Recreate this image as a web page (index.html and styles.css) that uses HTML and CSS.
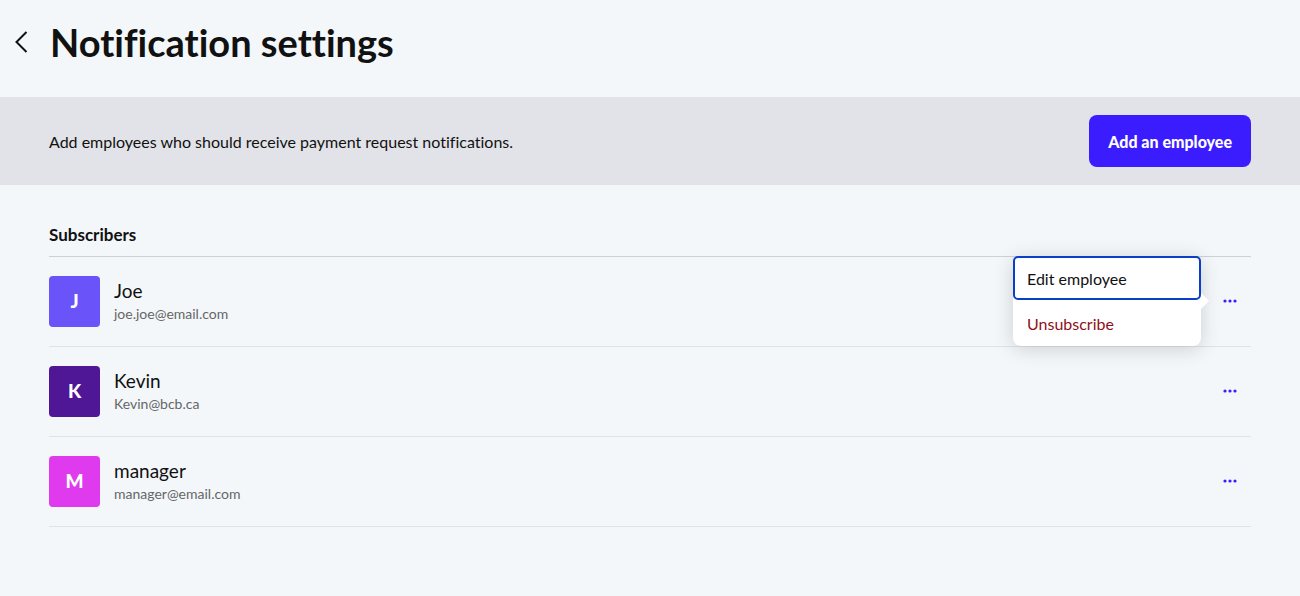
FILE: index.html
```
<!DOCTYPE html>
<html lang="en">
<head>
    <meta charset="UTF-8">
    <meta name="viewport" content="width=device-width, initial-scale=1.0">
    <title>Notification settings</title>
    <link rel="stylesheet" href="styles.css">
</head>
<body>
    <!-- Page Header -->
    <header class="page-header">
        <a href="#" class="back-link" aria-label="Back">
            <svg width="14" height="22" viewBox="0 0 14 22" fill="none" stroke="#111" stroke-width="2"><path d="M12.5 1L2.5 11L12.5 21"/></svg>
        </a>
        <h1>Notification settings</h1>
    </header>

    <!-- Banner -->
    <section class="banner">
        <p>Add employees who should receive payment request notifications.</p>
        <button type="button" class="add-button">Add an employee</button>
    </section>

    <!-- Subscribers -->
    <main class="subscribers">
        <h2>Subscribers</h2>
        <ul class="subscriber-list">
            <li class="subscriber">
                <div class="avatar avatar-joe">J</div>
                <div class="details">
                    <div class="name">Joe</div>
                    <div class="email">joe.joe@email.com</div>
                </div>
                <button type="button" class="more-button" aria-label="Options for Joe">
                    <svg width="14" height="4" viewBox="0 0 14 4" fill="#3a1cff"><circle cx="2" cy="2" r="1.6"/><circle cx="7" cy="2" r="1.6"/><circle cx="12" cy="2" r="1.6"/></svg>
                </button>
                <div class="menu">
                    <button type="button" class="menu-item selected">Edit employee</button>
                    <button type="button" class="menu-item danger">Unsubscribe</button>
                </div>
            </li>
            <li class="subscriber">
                <div class="avatar avatar-kevin">K</div>
                <div class="details">
                    <div class="name">Kevin</div>
                    <div class="email">Kevin@bcb.ca</div>
                </div>
                <button type="button" class="more-button" aria-label="Options for Kevin">
                    <svg width="14" height="4" viewBox="0 0 14 4" fill="#3a1cff"><circle cx="2" cy="2" r="1.6"/><circle cx="7" cy="2" r="1.6"/><circle cx="12" cy="2" r="1.6"/></svg>
                </button>
            </li>
            <li class="subscriber">
                <div class="avatar avatar-manager">M</div>
                <div class="details">
                    <div class="name">manager</div>
                    <div class="email">manager@email.com</div>
                </div>
                <button type="button" class="more-button" aria-label="Options for manager">
                    <svg width="14" height="4" viewBox="0 0 14 4" fill="#3a1cff"><circle cx="2" cy="2" r="1.6"/><circle cx="7" cy="2" r="1.6"/><circle cx="12" cy="2" r="1.6"/></svg>
                </button>
            </li>
        </ul>
    </main>
</body>
</html>
```
FILE: styles.css
```
/* General Styling */
* {
    box-sizing: border-box;
}

body {
    font-family: Lato, sans-serif;
    font-variant-ligatures: none;
    background-color: #f3f7fa;
    color: #111;
    margin: 0;
}

h1, h2, p, ul {
    margin: 0;
    padding: 0;
}

button {
    font-family: inherit;
    border: none;
    cursor: pointer;
}

/* Page Header */
.page-header {
    display: flex;
    align-items: center;
    gap: 22px;
    padding: 18px 14px 31px;
}

.back-link {
    display: flex;
}

h1 {
    font-size: 38px;
    line-height: 48px;
    font-weight: bold;
}

/* Banner */
.banner {
    display: flex;
    justify-content: space-between;
    align-items: center;
    padding: 18px 49px;
    background-color: #e2e3e8;
    font-size: 16px;
}

.add-button {
    height: 52px;
    padding: 0 19px;
    border-radius: 8px;
    background-color: #3a1cff;
    color: #fff;
    font-size: 16px;
    font-weight: 900;
}

/* Subscribers */
.subscribers {
    padding: 39px 49px;
}

h2 {
    padding-bottom: 11px;
    border-bottom: 1px solid #cdd1d5;
    font-size: 17px;
    line-height: 21px;
}

.subscriber-list {
    list-style: none;
}

.subscriber {
    position: relative;
    display: flex;
    align-items: center;
    gap: 14px;
    height: 90px;
    padding-bottom: 1px;
    border-bottom: 1px solid #dfe3e6;
}

.avatar {
    display: flex;
    justify-content: center;
    align-items: center;
    width: 51px;
    height: 51px;
    padding-bottom: 2px;
    border-radius: 4px;
    color: #fff;
    font-size: 19px;
    font-weight: 900;
}

.avatar-joe {
    background-color: #6a53f9;
}

.avatar-kevin {
    background-color: #4f1796;
}

.avatar-manager {
    background-color: #e03aee;
}

.details {
    flex: 1;
    padding-top: 2px;
}

.name {
    font-size: 19px;
    line-height: 24px;
}

.email {
    color: #666;
    font-size: 14px;
    line-height: 22px;
}

.more-button {
    display: flex;
    padding: 14px;
    background: none;
}

/* Options Menu */
.menu {
    position: absolute;
    top: -1px;
    right: 50px;
    width: 188px;
    border-radius: 8px;
    background-color: #fff;
    box-shadow: 0 3px 20px rgba(0, 0, 0, 0.16);
}

.menu::after {
    content: "";
    position: absolute;
    top: 37px;
    left: 100%;
    border: 8px solid transparent;
    border-left-color: #fff;
    border-right: none;
}

.menu-item {
    display: block;
    width: 100%;
    height: 46px;
    padding: 0 12px;
    background: none;
    border: 2px solid transparent;
    border-radius: 5px;
    color: #111;
    font-size: 16px;
    text-align: left;
}

.menu-item.selected {
    height: 44px;
    border-color: #0a3fc8;
}

.menu-item.danger {
    color: #8f1018;
}
```
